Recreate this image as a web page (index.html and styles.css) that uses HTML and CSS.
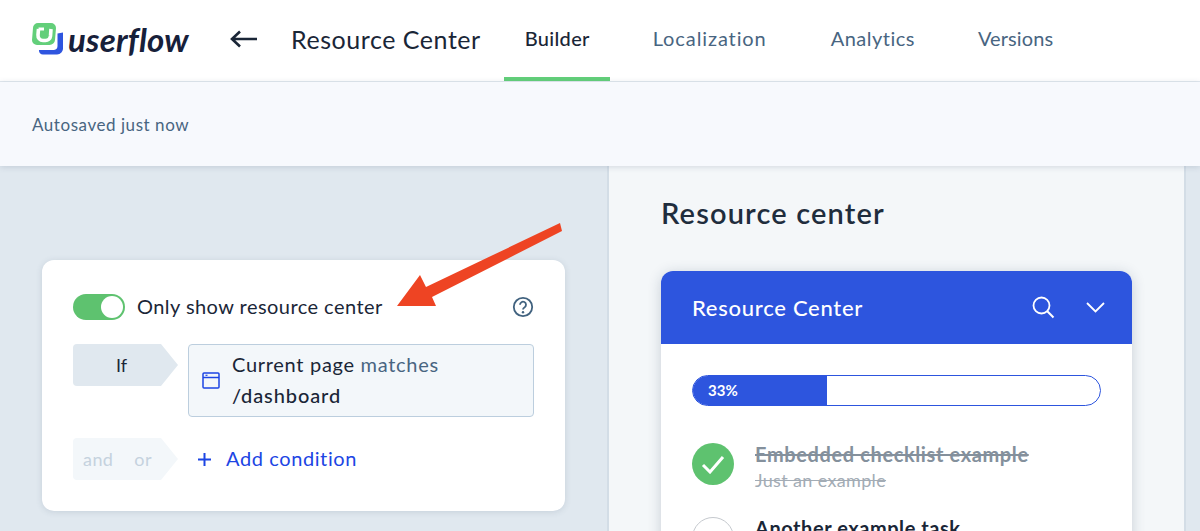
FILE: index.html
```html
<!DOCTYPE html>
<html lang="en">
<head>
<meta charset="utf-8">
<title>Resource Center</title>
<link rel="stylesheet" href="styles.css">
</head>
<body>
<div class="app">
  <header class="topbar">
    <div class="logo">
      <svg class="logo-mark" width="31" height="32" viewBox="0 0 31 32">
        <path d="M25.500 10.500 31 9.500V25a6 6 0 0 1-6 6.500H11a4 4 0 0 1-4-4.500h15a4 4 0 0 0 3.500-4z" fill="#2f55df"/>
        <path d="M6 0h13a5 5 0 0 1 5 5l-1 12a5.500 5.500 0 0 1-5.500 5H5a5 5 0 0 1-5-5L1 5a5 5 0 0 1 5-5z" fill="#63cf7a"/>
        <path d="M6.500 6 6 12a5 5 0 0 0 5 5.500h2.500a5 5 0 0 0 5-4.500l.5-7" fill="none" stroke="#fff" stroke-width="3.600"/>
        <path d="M6.500 6H12" stroke="#fff" stroke-width="3"/>
      </svg>
      <span class="logo-text">userflow</span>
    </div>
    <svg class="back" width="28" height="18" viewBox="0 0 28 18"><path d="M27 9H2M10 1.500 2 9l8 7.500" fill="none" stroke="#1a2637" stroke-width="2.600"/></svg>
    <h1 class="page-title">Resource Center</h1>
    <nav class="tabs">
      <a class="tab active">Builder</a>
      <a class="tab tab-wide">Localization</a>
      <a class="tab">Analytics</a>
      <a class="tab tab-narrow">Versions</a>
    </nav>
  </header>
  <div class="subbar">Autosaved just now</div>
  <main class="content">
    <section class="left">
      <div class="card">
        <div class="toggle-row">
          <span class="toggle"><span class="knob"></span></span>
          <span class="toggle-label">Only show resource center</span>
          <svg class="help" width="22" height="22" viewBox="0 0 22 22"><circle cx="11" cy="11" r="9.200" fill="none" stroke="#41627f" stroke-width="1.800"/><path d="M8 8.700a3 3 0 1 1 4.700 2.500c-1.100.7-1.700 1.100-1.700 2.300" fill="none" stroke="#41627f" stroke-width="1.800"/><circle cx="11" cy="16.200" r="1.200" fill="#41627f"/></svg>
        </div>
        <div class="cond-row">
          <div class="chip">If</div>
          <div class="cond-box">
            <svg class="page-icon" width="18" height="17" viewBox="0 0 18 17"><rect x="1" y="1" width="16" height="15" rx="1" fill="none" stroke="#1c45e4" stroke-width="1.500"/><path d="M1 5.500h16" stroke="#1c45e4" stroke-width="1.500"/><path d="M3.500 3.300h2" stroke="#1c45e4" stroke-width="1.200"/></svg>
            <div class="cond-text">
              <div>Current page <span class="muted">matches</span></div>
              <div class="cond-value">/dashboard</div>
            </div>
          </div>
        </div>
        <div class="add-row">
          <div class="chip chip-light"><span>and</span><span>or</span></div>
          <a class="add"><svg width="15" height="15" viewBox="0 0 15 15"><path d="M7.500 1v13M1 7.500h13" stroke="#1c45e4" stroke-width="2"/></svg><span class="add-label">Add condition</span></a>
        </div>
      </div>
    </section>
    <section class="middle">
      <h2 class="preview-title">Resource center</h2>
      <div class="widget">
        <div class="widget-head">
          <span class="widget-title">Resource Center</span>
          <svg class="search" width="23" height="23" viewBox="0 0 23 23"><circle cx="9.500" cy="9.500" r="8" fill="none" stroke="#fff" stroke-width="1.800"/><path d="m15.300 15.300 6.200 6.200" stroke="#fff" stroke-width="2"/></svg>
          <svg class="chev" width="19" height="11" viewBox="0 0 19 11"><path d="m1 1 8.500 8.500L18 1" fill="none" stroke="#fff" stroke-width="1.800"/></svg>
        </div>
        <div class="widget-body">
          <div class="progress"><div class="progress-fill" style="width:33%">33%</div></div>
          <div class="task done">
            <span class="circle circle-done"><svg width="24" height="20" viewBox="0 0 24 20"><path d="m2 11 7 7L22 3" fill="none" stroke="#fff" stroke-width="3"/></svg></span>
            <div>
              <div class="task-title">Embedded checklist example</div>
              <div class="task-sub">Just an example</div>
            </div>
          </div>
          <div class="task">
            <span class="circle"></span>
            <div class="task-title">Another example task</div>
          </div>
        </div>
      </div>
    </section>
    <aside class="right"></aside>
  </main>
  <svg class="arrow" width="176" height="90" viewBox="0 0 176 90"><path d="M7 86 30 55l6 12L170 3l2 8L42 77l4 9z" fill="#ee4423"/></svg>
</div>
</body>
</html>
```
FILE: styles.css
```css
* { box-sizing: border-box; }
html, body { margin: 0; height: 531px; overflow: hidden; }
body { font-family: "Lato", "Noto Sans", sans-serif; color: #1a2637; background: #fff; }
.app { position: relative; height: 531px; display: flex; flex-direction: column; overflow: hidden; }

.topbar { height: 82px; flex: none; display: flex; align-items: center; background: #fff; border-bottom: 1px solid #e2e9ef; padding-left: 32px; }
.logo { display: flex; align-items: center; width: 198px; gap: 5px; margin-top: -4px; }
.logo-mark { flex: none; }
.logo-text { font-size: 33px; font-weight: 700; font-style: italic; color: #17203a; letter-spacing: .2px; line-height: 32px; }
.back { flex: none; margin-right: 33px; margin-top: -4px; }
.page-title { margin: -4px 23px 0 0; font-size: 25px; font-weight: 400; letter-spacing: .55px; color: #1a2637; white-space: nowrap; }
.tabs { display: flex; align-self: stretch; }
.tab { display: flex; align-items: center; justify-content: center; height: 81px; padding: 0 21px 2px; font-size: 20px; letter-spacing: .5px; color: #486581; margin-right: 22px; border-bottom: 4px solid transparent; }
.tab-wide { letter-spacing: .9px; }
.tab-narrow { letter-spacing: .1px; margin-left: -1px; }
.tab.active { color: #1a2637; border-bottom-color: #63cf7a; font-weight: 500; letter-spacing: .3px; padding-right: 20px; }

.subbar { height: 84px; flex: none; display: flex; align-items: center; padding-left: 32px; background: #f7f9fd; color: #486581; font-size: 17px; letter-spacing: .55px; box-shadow: 0 1px 6px rgba(60, 85, 110, .18); position: relative; z-index: 1; }

.content { flex: 1; display: flex; min-height: 0; }
.left { width: 609px; flex: none; padding: 94px 0 0 42px; background: #e0e8ef; border-right: 2px solid #d3dde6; }
.card { width: 523px; height: 251px; background: #fff; border-radius: 12px; padding: 34px 31px 0; box-shadow: 0 1px 6px rgba(60, 85, 110, .16); }
.toggle-row { display: flex; align-items: center; height: 26px; }
.toggle { width: 52px; height: 26px; border-radius: 13px; background: #5ec26f; display: flex; justify-content: flex-end; padding: 2px; flex: none; }
.knob { width: 22px; height: 22px; border-radius: 50%; background: #fff; }
.toggle-label { font-size: 20px; letter-spacing: .45px; margin: 0 0 2px 12px; flex: 1; }
.help { flex: none; margin-right: 0; }

.cond-row { display: flex; margin-top: 24px; }
.chip { width: 105px; height: 42px; background: #e0e8ef; clip-path: polygon(0 0, 88px 0, 105px 50%, 88px 100%, 0 100%); border-radius: 4px 0 0 4px; display: flex; align-items: center; justify-content: center; font-size: 18px; padding-right: 8px; flex: none; }
.cond-box { margin-left: 10px; width: 346px; height: 73px; background: #f3f7fa; border: 1px solid #bccede; border-radius: 4px; display: flex; align-items: center; padding: 0 0 2px 13px; }
.page-icon { flex: none; margin-top: 2px; }
.cond-text { margin-left: 12px; font-size: 20px; line-height: 31px; letter-spacing: .7px; }
.muted { color: #486581; }
.cond-value { font-weight: 500; letter-spacing: .9px; }

.add-row { display: flex; align-items: center; margin-top: 21px; }
.chip-light { background: #f3f7fa; color: #c5d2de; gap: 21px; padding-right: 16px; letter-spacing: .4px; }
.add { margin-left: 19px; display: flex; align-items: center; gap: 14px; color: #1c45e4; font-size: 20px; letter-spacing: .6px; }
.add-label { margin-bottom: 2px; }

.middle { width: 577px; flex: none; background: #f4f7f9; border-right: 2px solid #d3dde6; padding: 28px 0 0 52px; overflow: hidden; }
.preview-title { margin: 0; font-size: 29px; font-weight: 600; letter-spacing: 1.15px; line-height: 38px; color: #1f2d3d; }
.widget { margin-top: 39px; width: 471px; border-radius: 12px 12px 0 0; background: #fff; box-shadow: 0 2px 14px rgba(30, 50, 80, .2); height: 300px; }
.widget-head { height: 73px; background: #2d55de; border-radius: 12px 12px 0 0; display: flex; align-items: center; padding: 0 27px 0 31px; color: #fff; }
.widget-title { font-size: 22px; font-weight: 500; letter-spacing: .73px; flex: 1; }
.search { margin-right: 31px; }
.widget-body { padding: 31px 31px 0; }
.progress { width: 409px; height: 31px; border: 1px solid #2d55de; border-radius: 16px; overflow: hidden; background: #fff; }
.progress-fill { height: 100%; background: #2d55de; color: #fff; font-size: 15px; font-weight: 700; line-height: 29px; padding-left: 15px; }
.task { display: flex; gap: 21px; margin-top: 37px; align-items: flex-start; }
.task + .task { margin-top: 25px; }
.circle { width: 42px; height: 42px; border-radius: 50%; border: 1px solid #c5c9ce; flex: none; }
.circle-done { background: #5ec26f; border: 0; display: flex; align-items: center; justify-content: center; }
.task-title { font-size: 20px; font-weight: 700; letter-spacing: .55px; line-height: 22px; color: #1a2637; }
.done .task-title { color: #84909c; text-decoration: line-through; letter-spacing: .62px; }
.task-sub { margin-top: 3px; font-size: 18px; letter-spacing: .35px; line-height: 24px; color: #a3acb5; text-decoration: line-through; }
.right { flex: 1; background: #e0e8ef; }

.arrow { position: absolute; left: 390px; top: 220px; }
```
